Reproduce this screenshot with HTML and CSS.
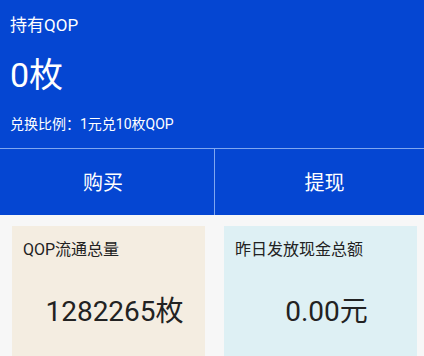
FILE: index.html
```html
<!DOCTYPE html>
<html lang="zh-CN">
<head>
    <meta charset="UTF-8">
    <meta name="viewport" content="width=device-width, initial-scale=1.0">
    <title>QOP</title>
    <link rel="stylesheet" href="styles.css">
</head>
<body>
 <div class="main-container">
  <div class="top">
   <div class="hold-title">持有QOP</div>
   <div class="hold-amount">0枚</div>
   <div class="rate">兑换比例：1元兑10枚QOP</div>
  </div>
  <div class="actions">
   <button class="action action-buy">购买</button>
   <button class="action action-cash">提现</button>
  </div>
  <div class="cards">
   <div class="card card-total">
    <div class="card-title">QOP流通总量</div>
    <div class="card-value">1282265枚</div>
   </div>
   <div class="card card-cash">
    <div class="card-title">昨日发放现金总额</div>
    <div class="card-value">0.00元</div>
   </div>
  </div>
 </div>
</body>
</html>
```
FILE: styles.css
```css
body{
    margin:0;
    font-family:Roboto, "Noto Sans CJK SC", sans-serif;
    background-color:#f7f7f7;
}
.main-container{
    width:100%;
    height:100vh;
    overflow:hidden;
}
.top{
    background-color:#0546d2;
    color:#ffffff;
    padding:0 10px;
    border-bottom:1px solid #7fa6f0;
}
.hold-title{
    font-size:17px;
    line-height:50px;
}
.hold-amount{
    font-size:34px;
    line-height:50px;
}
.rate{
    font-size:14px;
    line-height:48px;
}
.actions{
    display:flex;
    background-color:#0546d2;
    height:66px;
}
.action{
    font-family:Roboto, "Noto Sans CJK SC", sans-serif;
    background:none;
    border:none;
    color:#ffffff;
    font-size:20px;
    padding:0 0 2px 0;
    margin:0;
}
.action-buy{
    width:214px;
    padding-right:8px;
}
.action-cash{
    flex:1;
    border-left:1px solid #7fa6f0;
    padding-left:10px;
}
.cards{
    display:flex;
    gap:19px;
    padding:11px 7px 0 12px;
}
.card{
    flex:1;
    height:150px;
    padding:12px 11px;
    color:#222222;
}
.card-total{background-color:#f4ede1}
.card-cash{background-color:#def0f4}
.card-title{
    font-size:16px;
    line-height:24px;
}
.card-value{
    margin-top:30px;
    padding-left:12px;
    text-align:center;
    font-size:28px;
    line-height:40px;
}
```
